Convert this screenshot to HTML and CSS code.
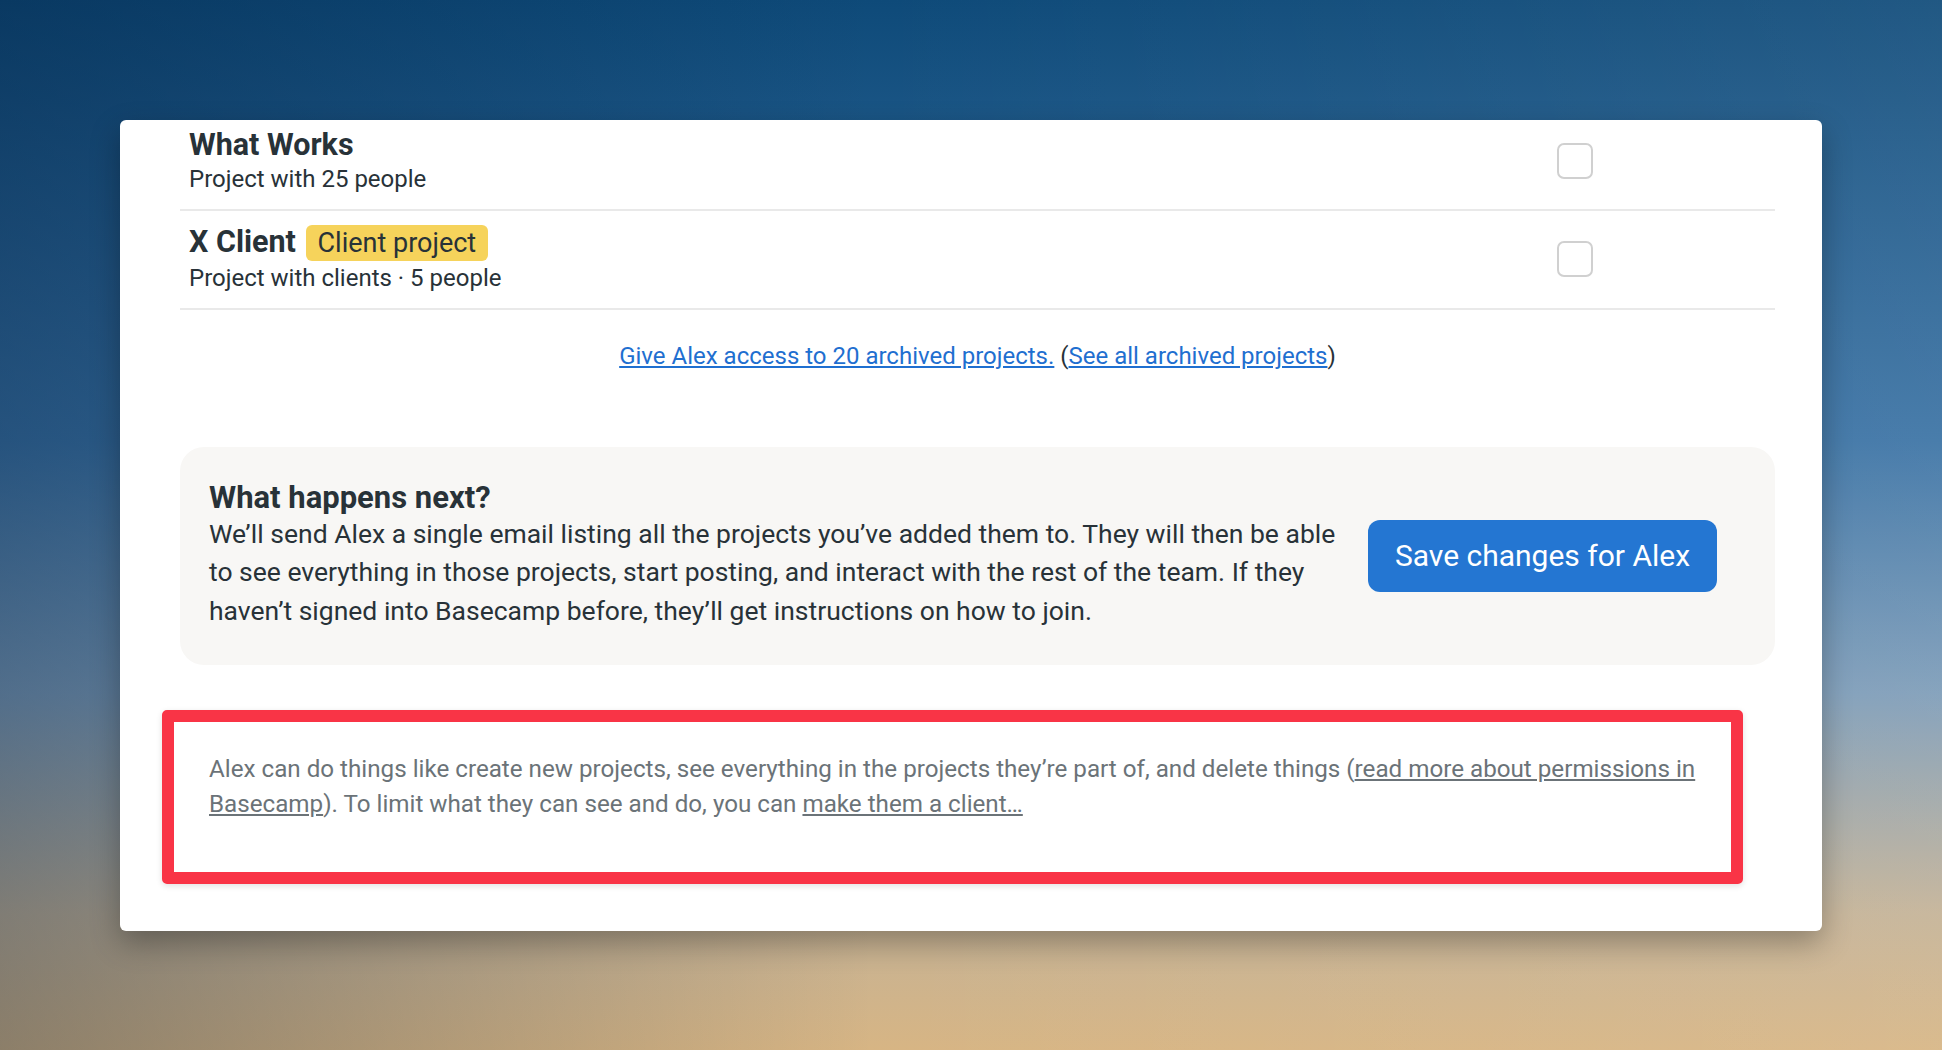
FILE: index.html
```html
<!DOCTYPE html>
<html lang="en">
<head>
    <meta charset="UTF-8">
    <meta name="viewport" content="width=device-width, initial-scale=1.0">
    <title>Edit access for Alex</title>
    <link rel="stylesheet" href="styles.css">
</head>
<body>
    <div class="panel">
        <ul class="project-list">
            <li class="project-row">
                <div class="project-info">
                    <div class="project-name">What Works</div>
                    <div class="project-meta">Project with 25 people</div>
                </div>
                <input type="checkbox" class="project-check">
            </li>
            <li class="project-row">
                <div class="project-info">
                    <div class="project-name">X Client <span class="badge">Client project</span></div>
                    <div class="project-meta">Project with clients · 5 people</div>
                </div>
                <input type="checkbox" class="project-check">
            </li>
        </ul>

        <p class="archived">
            <a href="#">Give Alex access to 20 archived projects.</a> (<a href="#">See all archived projects</a>)
        </p>

        <div class="next-steps">
            <div class="next-text">
                <h2>What happens next?</h2>
                <p>We’ll send Alex a single email listing all the projects you’ve added them to. They will then be able to see everything in those projects, start posting, and interact with the rest of the team. If they haven’t signed into Basecamp before, they’ll get instructions on how to join.</p>
            </div>
            <button type="submit" class="save-btn">Save changes for Alex</button>
        </div>

        <div class="permissions-note">
            <p>Alex can do things like create new projects, see everything in the projects they’re part of, and delete things (<a href="#">read more about permissions in Basecamp</a>). To limit what they can see and do, you can <a href="#">make them a client…</a></p>
        </div>
    </div>
</body>
</html>
```

FILE: styles.css
```css
body {
    margin: 0;
    height: 1050px;
    box-sizing: border-box;
    padding: 120px 0 0 120px;
    font-family: Roboto, "Liberation Sans", Arial, sans-serif;
    color: #283238;
    background:
        linear-gradient(90deg, rgba(0, 25, 55, 0.35) 0%, rgba(0, 25, 55, 0) 45%, rgba(255, 255, 255, 0.08) 100%),
        linear-gradient(180deg, #0e4a79 0%, #3a72a4 42%, #7d9cb8 66%, #c4b296 87%, #d7b584 100%);
    overflow: hidden;
}
.panel {
    width: 1702px;
    box-sizing: border-box;
    padding: 8px 47px 47px 60px;
    background-color: #fff;
    border-radius: 6px;
    box-shadow: 0 12px 30px rgba(0, 0, 0, 0.3);
}
.project-list {
    list-style-type: none;
    margin: 0;
    padding: 0;
}
.project-row {
    display: flex;
    align-items: center;
    justify-content: space-between;
    padding: 0 182px 13px 9px;
    border-bottom: 2px solid #e9e9e9;
}
.project-row + .project-row {
    padding-top: 14px;
}
.project-name {
    font-size: 30.5px;
    font-weight: bold;
    line-height: 34px;
}
.badge {
    display: inline-block;
    margin-left: 2px;
    padding: 0 12px;
    font-size: 27px;
    font-weight: normal;
    line-height: 36px;
    background-color: #f6d35b;
    border-radius: 6px;
    vertical-align: top;
}
.project-meta {
    font-size: 24px;
    line-height: 34px;
}
.project-check {
    appearance: none;
    width: 36px;
    height: 36px;
    margin: 0 0 3px;
    border: 2px solid #d0d0d0;
    border-radius: 7px;
    background-color: #fff;
}
.archived {
    margin: 29px 0 0;
    text-align: center;
    font-size: 24px;
    line-height: 34px;
}
.archived a {
    color: #1f6fd0;
}
.next-steps {
    display: flex;
    align-items: center;
    margin-top: 74px;
    padding: 34px 58px 35px 29px;
    background-color: #f8f7f5;
    border-radius: 24px;
}
.next-text {
    flex: 1;
    margin-right: 20px;
}
.next-text h2 {
    margin: 0;
    font-size: 31px;
    line-height: 34px;
}
.next-text p {
    margin: 0;
    font-size: 26.5px;
    line-height: 38.4px;
}
.save-btn {
    width: 349px;
    height: 72px;
    padding: 0;
    font-family: inherit;
    font-size: 30px;
    color: #fff;
    background-color: #2476d2;
    border: none;
    border-radius: 12px;
    cursor: pointer;
}
.save-btn:hover {
    background-color: #1d64b5;
}
.permissions-note {
    width: 1581px;
    box-sizing: border-box;
    margin: 45px 0 0 -18px;
    padding: 30px 12px 50px 35px;
    border: 12px solid #f93446;
    border-radius: 5px;
    box-shadow: 0 2px 6px rgba(0, 0, 0, 0.12);
}
.permissions-note p {
    margin: 0;
    font-size: 24.2px;
    line-height: 34.7px;
    color: #6b7378;
}
.permissions-note a {
    color: #6b7378;
}
```
